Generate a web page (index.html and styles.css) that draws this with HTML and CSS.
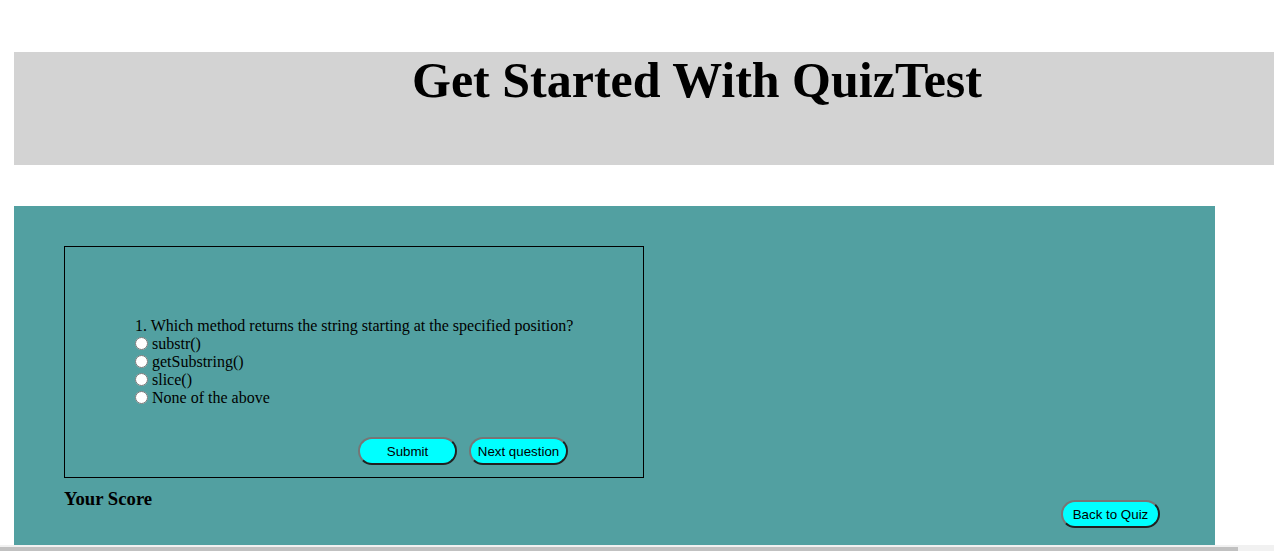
FILE: index.html
```html
<!DOCTYPE html>
<html lang="en">
<head>
<meta charset="utf-8">
<title>QuizTest</title>
<link rel="stylesheet" href="styles.css">
</head>
<body>
  <header class="site-header">
    <h1 class="site-title">Get Started With QuizTest</h1>
  </header>

  <main class="quiz-area">
    <div class="quiz-box">
      <div class="question">1. Which method returns the string starting at the specified position?</div>
      <div class="options">
        <label class="option"><input type="radio" name="q1" class="radio">substr()</label>
        <label class="option"><input type="radio" name="q1" class="radio">getSubstring()</label>
        <label class="option"><input type="radio" name="q1" class="radio">slice()</label>
        <label class="option"><input type="radio" name="q1" class="radio">None of the above</label>
      </div>
      <div class="actions">
        <button class="btn">Submit</button>
        <button class="btn">Next question</button>
      </div>
    </div>
    <div class="score-row">
      <h3 class="score-title">Your Score</h3>
      <button class="btn btn-back">Back to Quiz</button>
    </div>
  </main>

  <div class="hscroll"><div class="hscroll-thumb"></div></div>
</body>
</html>
```

FILE: styles.css
```css
html, body {
  overflow: hidden;
}

body {
  margin: 0;
  padding: 52px 0 0 14px;
  font-family: "Liberation Serif", "Times New Roman", serif;
  font-size: 16px;
  color: #000;
  background: #fff;
}

.site-header {
  width: 1297px;
  height: 113px;
  box-sizing: border-box;
  padding: 0 0 0 69px;
  background: #d3d3d3;
}

.site-title {
  margin: 0;
  text-align: center;
  font-size: 50px;
  font-weight: bold;
  line-height: 57px;
}

.quiz-area {
  margin-top: 41px;
  width: 1201px;
  height: 360px;
  box-sizing: border-box;
  padding: 40px 55px 0 50px;
  background: #52a0a1;
}

.quiz-box {
  width: 580px;
  box-sizing: border-box;
  border: 1px solid #000;
  padding: 70px 20px 12px 70px;
}

.question {
  line-height: 18px;
}

.options {
  display: flex;
  flex-direction: column;
}

.option {
  display: flex;
  align-items: flex-start;
  line-height: 18px;
  height: 18px;
}

.radio {
  width: 13px;
  height: 13px;
  margin: 2px 4px 0 0;
}

.actions {
  display: flex;
  justify-content: flex-end;
  gap: 12px;
  margin: 30px 55px 0 0;
}

.btn {
  width: 99px;
  height: 28px;
  padding: 0 6px;
  font-family: "Liberation Sans", Arial, sans-serif;
  font-size: 13.333px;
  color: #000;
  background-color: #00ffff;
  border: 2px outset #767676;
  border-radius: 14px;
}

.score-row {
  display: flex;
  justify-content: space-between;
  align-items: flex-start;
}

.score-title {
  margin: 10px 0 0;
  font-size: 18.72px;
  font-weight: bold;
  line-height: 21px;
}

.btn-back {
  margin-top: 22px;
}

.hscroll {
  position: fixed;
  left: 0;
  right: 0;
  bottom: 0;
  height: 6px;
  background: #f1f1f1;
}

.hscroll-thumb {
  width: 1238px;
  height: 4px;
  margin-top: 2px;
  background: #c1c1c1;
}
```
